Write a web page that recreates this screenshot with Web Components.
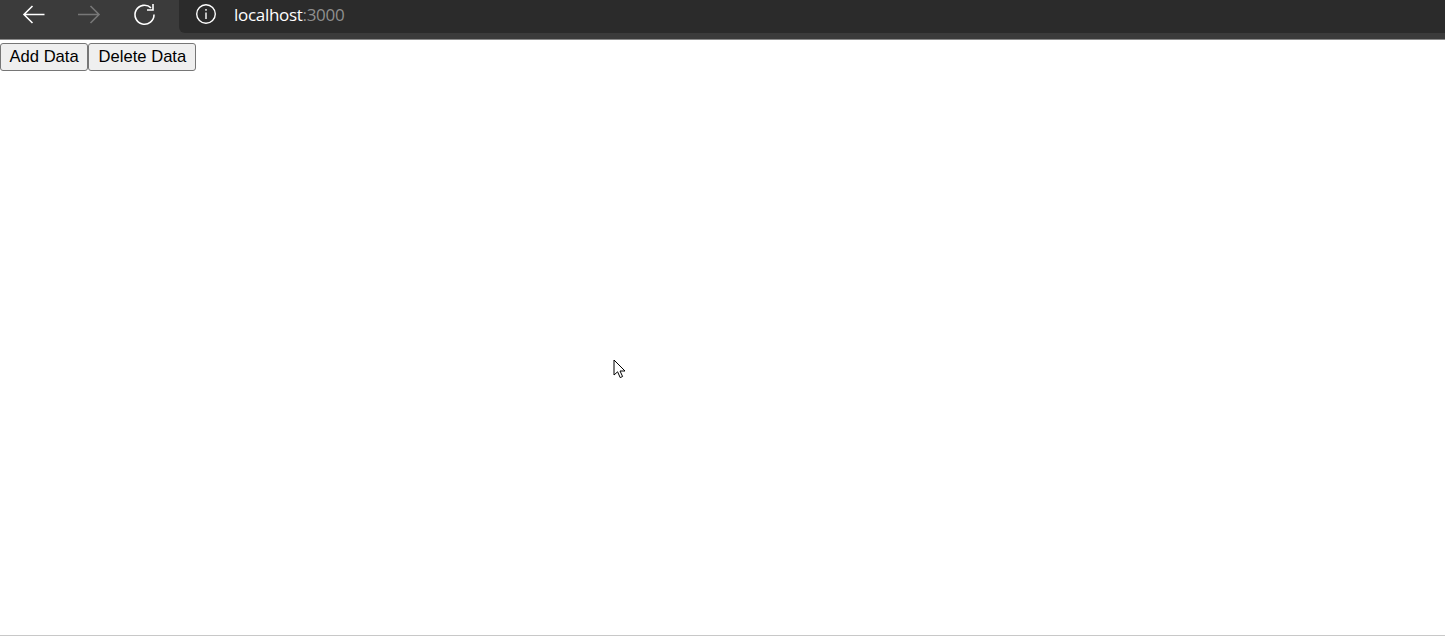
<!DOCTYPE html>
<html>
<head>
<meta charset="utf-8">
<title>localhost:3000</title>
<style>
  html, body { margin: 0; height: 100%; background: #fff; overflow: hidden; }
  body { display: flex; flex-direction: column; font-family: "Liberation Sans", Arial, sans-serif; }
  demo-page { flex: 1; min-height: 0; }
</style>
</head>
<body>
<browser-bar url-host="localhost" url-port=":3000"></browser-bar>
<demo-page>
  <plain-button>Add Data</plain-button>
  <plain-button>Delete Data</plain-button>
</demo-page>
<script>
class BrowserBar extends HTMLElement {
  constructor() { super(); this.attachShadow({ mode: "open" }); }
  connectedCallback() {
    this.shadowRoot.innerHTML = `
      <style>
        :host{display:flex;height:39px;background:#3b3b3b;border-bottom:1px solid #8a8a8a;color:#fff;font-family:"Open Sans","Noto Sans",sans-serif}
        .nav{display:flex;align-items:flex-start;width:179px;flex:none;padding:3px 0 0 20px;gap:27px;box-sizing:border-box}
        .nav svg{width:28px;height:24px;flex:none;fill:none;stroke:currentColor;stroke-width:1.6}
        .off{color:#777}
        .addr{flex:1;height:33px;background:#2b2b2b;border-bottom-left-radius:6px;display:flex;align-items:flex-start;padding:3px 0 0 16px;box-sizing:border-box}
        .addr svg{width:22px;height:22px;flex:none;fill:none;stroke:currentColor;stroke-width:1.4}
        .url{margin-left:17px;font-size:17px;line-height:23px;letter-spacing:-.3px}
        .url span{color:#8f8f8f}
      </style>
      <div class="nav">
        <svg viewBox="0 0 28 24"><path d="M24.5 11.5H4.5M12.5 3L4 11.5 12.5 20"/></svg>
        <svg class="off" viewBox="0 0 28 24"><path d="M3 11.5H24M15.5 3L24 11.5 15.5 20"/></svg>
        <svg viewBox="0 0 28 24"><path d="M21 4.8A9.5 9.5 0 1 0 24 11.5"/><path d="M23 1V7H17"/></svg>
      </div>
      <div class="addr">
        <svg viewBox="0 0 22 22"><circle cx="11" cy="11" r="9.3"/><path d="M11 9.5V16M11 6V7.8"/></svg>
        <div class="url">${this.getAttribute("url-host")}<span>${this.getAttribute("url-port")}</span></div>
      </div>`;
  }
}

class DemoPage extends HTMLElement {
  constructor() { super(); this.attachShadow({ mode: "open" }); }
  connectedCallback() {
    this.shadowRoot.innerHTML = `
      <style>
        :host{display:flex;flex-direction:column;position:relative;background:#fff;border-bottom:1px solid #c8c8c8}
        .row{display:flex;align-items:flex-start;padding-top:3px}
        svg{position:absolute;left:613px;top:319px;width:13px;height:20px}
      </style>
      <div class="row"><slot></slot></div>
      <svg viewBox="0 0 13 20"><path d="M1 1V16L4.6 12.8 7.2 18.6 9.6 17.5 7 12H12Z" fill="#fff" stroke="#000" stroke-width="1"/></svg>`;
  }
}

class PlainButton extends HTMLElement {
  constructor() { super(); this.attachShadow({ mode: "open" }); }
  connectedCallback() {
    this.shadowRoot.innerHTML = `
      <style>
        :host{display:block}
        button{display:block;height:28px;padding:0 8.5px 1px;margin:0;background:#efefef;border:1px solid #767676;border-radius:3px;color:#000;font:16.6px "Liberation Sans",Arial,sans-serif}
        :host(:last-child) button{padding-left:9.4px;padding-right:8.8px}
      </style>
      <button><slot></slot></button>`;
  }
}

customElements.define("browser-bar", BrowserBar);
customElements.define("demo-page", DemoPage);
customElements.define("plain-button", PlainButton);
</script>
</body>
</html>
